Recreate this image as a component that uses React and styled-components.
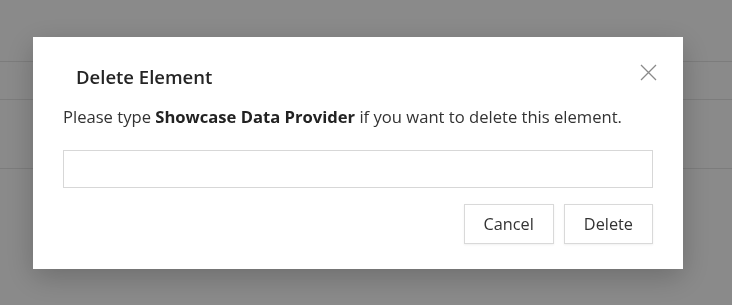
import React from 'react'
import styled, { createGlobalStyle } from 'styled-components'

const GlobalStyle = createGlobalStyle`
  html, body {
    margin: 0;
    height: 100%;
    background: #fff;
    font-family: 'Open Sans', 'Liberation Sans', sans-serif;
    overflow: hidden;
  }
`

const rows = [62, 38, 69]

const App = () => {
  return (
    <>
      <GlobalStyle />
      <Page>
        {rows.map((h, i) => (
          <Row key={i} $h={h} />
        ))}
      </Page>
      <Overlay>
        <Dialog role='dialog'>
          <Header>
            <Title>Delete Element</Title>
            <CloseButton type='button' aria-label='close'>
              <svg width='17' height='17' viewBox='0 0 17 17'>
                <path d='M1 1 L16 16 M16 1 L1 16' stroke='#8a8a8a' strokeWidth='1.3' fill='none' />
              </svg>
            </CloseButton>
          </Header>
          <Message>
            Please type <strong>Showcase Data Provider</strong> if you want to delete this element.
          </Message>
          <Input type='text' />
          <Actions>
            <Button type='button'>Cancel</Button>
            <Button type='button'>Delete</Button>
          </Actions>
        </Dialog>
      </Overlay>
    </>
  )
}

const Page = styled.div`
  height: 100vh;
  background: #fff;
`

const Row = styled.div`
  height: ${(p) => p.$h}px;
  border-bottom: 1px solid #e6e6e6;
  box-sizing: border-box;
`

const Overlay = styled.div`
  position: fixed;
  inset: 0;
  background: rgba(0, 0, 0, 0.46);
  display: flex;
  align-items: flex-start;
  justify-content: flex-start;
  padding: 37px 0 0 33px;
`

const Dialog = styled.div`
  width: 650px;
  height: 232px;
  box-sizing: border-box;
  background: #fff;
  box-shadow: 0 8px 28px rgba(0, 0, 0, 0.22);
  padding: 24px 26px 25px 30px;
  display: flex;
  flex-direction: column;
`

const Header = styled.div`
  display: flex;
  align-items: center;
  justify-content: space-between;
  padding-left: 13px;
`

const Title = styled.h2`
  margin: 0;
  font-size: 18.5px;
  font-weight: 600;
  color: #252525;
  line-height: 32px;
`

const CloseButton = styled.button`
  background: transparent;
  border: none;
  padding: 0;
  width: 17px;
  height: 17px;
  margin-top: -10px;
  cursor: pointer;
  svg {
    display: block;
  }
`

const Message = styled.p`
  margin: 12px 0 0;
  font-size: 16.6px;
  line-height: 24px;
  color: #333;
  strong {
    font-weight: 700;
    color: #222;
  }
`

const Input = styled.input`
  margin-top: 21px;
  width: 590px;
  height: 38px;
  box-sizing: border-box;
  border: 1px solid #d7d7d7;
  outline: none;
  font: inherit;
`

const Actions = styled.div`
  margin-top: 16px;
  width: 590px;
  display: flex;
  justify-content: flex-end;
  gap: 10px;
`

const Button = styled.button`
  height: 40px;
  padding: 0 19px;
  background: #fff;
  border: 1px solid #d9d9d9;
  box-shadow: 0 1px 2px rgba(0, 0, 0, 0.06);
  font-family: inherit;
  font-size: 16.3px;
  color: #333;
  cursor: pointer;
`

export default App
